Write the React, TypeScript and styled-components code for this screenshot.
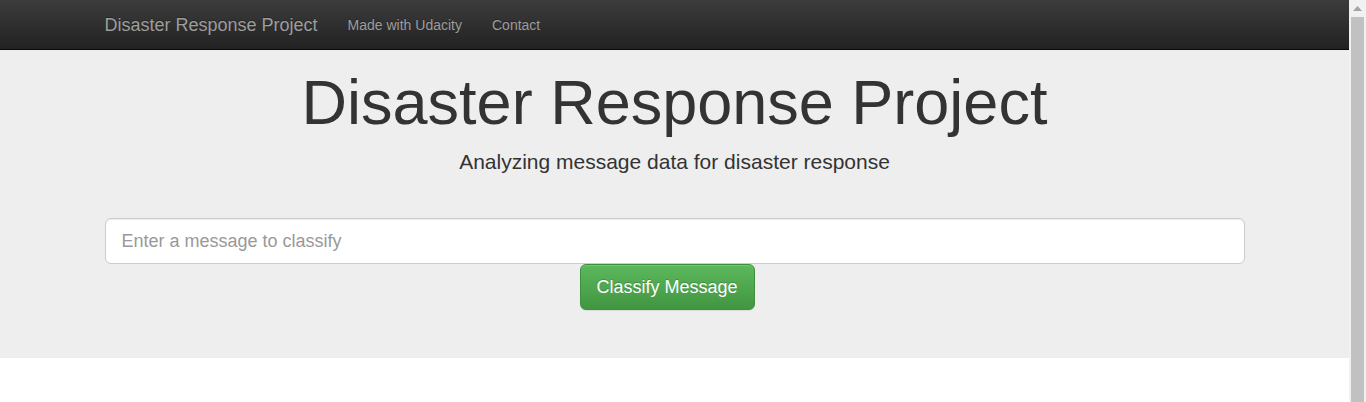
import React from "react";
import styled, { createGlobalStyle } from "styled-components";

const GlobalStyle = createGlobalStyle`
  html, body { margin: 0; padding: 0; height: 402px; overflow: hidden; }
  body {
    font-family: "Liberation Sans", Arial, Helvetica, sans-serif;
    font-size: 14px;
    line-height: 1.42857143;
    color: #333;
    background: #fff;
  }
  * { box-sizing: border-box; }
`;

const Window = styled.div`
  display: flex;
  width: 1366px;
  height: 402px;
`;

const Page = styled.div`
  flex: 1;
  min-width: 0;
  display: flex;
  flex-direction: column;
  background: #fff;
`;

const Navbar = styled.nav`
  height: 50px;
  background-image: linear-gradient(to bottom, #3c3c3c 0%, #222 100%);
  border-bottom: 1px solid #080808;
  flex-shrink: 0;
`;

const Container = styled.div`
  width: 1170px;
  margin: 0 auto;
  padding: 0 15px;
`;

const NavInner = styled(Container)`
  display: flex;
  align-items: center;
  height: 49px;
`;

const Brand = styled.a`
  font-size: 18px;
  line-height: 20px;
  padding: 15px 15px 14px 0;
  color: #9d9d9d;
  text-decoration: none;
  text-shadow: 0 -1px 0 rgba(0, 0, 0, 0.25);
`;

const NavLink = styled.a`
  font-size: 14px;
  line-height: 20px;
  padding: 15px 15px 14px;
  color: #9d9d9d;
  text-decoration: none;
  text-shadow: 0 -1px 0 rgba(0, 0, 0, 0.25);
`;

const Jumbotron = styled.section`
  background: #eee;
  padding: 18px 0 48px;
`;

const Title = styled.h1`
  margin: 0 0 10px;
  font-size: 63px;
  font-weight: 500;
  line-height: 1.1;
  text-align: center;
  color: #333;
`;

const Lead = styled.p`
  margin: 0 0 15px;
  font-size: 21px;
  font-weight: 200;
  line-height: 30px;
  text-align: center;
  color: #333;
`;

const Form = styled.form`
  display: flex;
  flex-direction: column;
  padding-top: 26px;
`;

const Input = styled.input`
  width: 100%;
  height: 46px;
  padding: 10px 16px;
  font-family: inherit;
  font-size: 18px;
  line-height: 1.3333333;
  color: #555;
  background: #fff;
  border: 1px solid #ccc;
  border-radius: 6px;
  box-shadow: inset 0 1px 1px rgba(0, 0, 0, 0.075);
  outline: none;
  &::placeholder { color: #999; }
`;

const Button = styled.button`
  align-self: flex-start;
  margin-left: 475px;
  height: 46px;
  padding: 10px 16px;
  font-family: inherit;
  font-size: 18px;
  line-height: 1.3333333;
  white-space: nowrap;
  color: #fff;
  background-image: linear-gradient(to bottom, #5cb85c 0%, #419641 100%);
  border: 1px solid #3e8f3e;
  border-radius: 6px;
  text-shadow: 0 -1px 0 rgba(0, 0, 0, 0.2);
  box-shadow: inset 0 1px 0 rgba(255, 255, 255, 0.15), 0 1px 1px rgba(0, 0, 0, 0.075);
  cursor: pointer;
`;

const ScrollTrack = styled.div`
  width: 17px;
  flex-shrink: 0;
  background: #f1f1f1;
  display: flex;
  flex-direction: column;
  align-items: center;
  padding: 0 2px 0 2px;
`;

const ArrowBox = styled.div`
  height: 17px;
  width: 100%;
  display: flex;
  align-items: center;
  justify-content: center;
`;

const Thumb = styled.div`
  flex: 1;
  width: 100%;
  background: #c1c1c1;
`;

export default function App() {
  return (
    <>
      <GlobalStyle />
      <Window>
        <Page>
          <Navbar>
            <NavInner>
              <Brand href="#">Disaster Response Project</Brand>
              <NavLink href="#">Made with Udacity</NavLink>
              <NavLink href="#">Contact</NavLink>
            </NavInner>
          </Navbar>
          <Jumbotron>
            <Container>
              <Title>Disaster Response Project</Title>
              <Lead>Analyzing message data for disaster response</Lead>
              <Form onSubmit={(e) => e.preventDefault()}>
                <Input type="text" placeholder="Enter a message to classify" />
                <Button type="submit">Classify Message</Button>
              </Form>
            </Container>
          </Jumbotron>
        </Page>
        <ScrollTrack>
          <ArrowBox>
            <svg width="9" height="5" viewBox="0 0 9 5">
              <polygon points="4.5,0 9,5 0,5" fill="#a3a3a3" />
            </svg>
          </ArrowBox>
          <Thumb />
        </ScrollTrack>
      </Window>
    </>
  );
}
